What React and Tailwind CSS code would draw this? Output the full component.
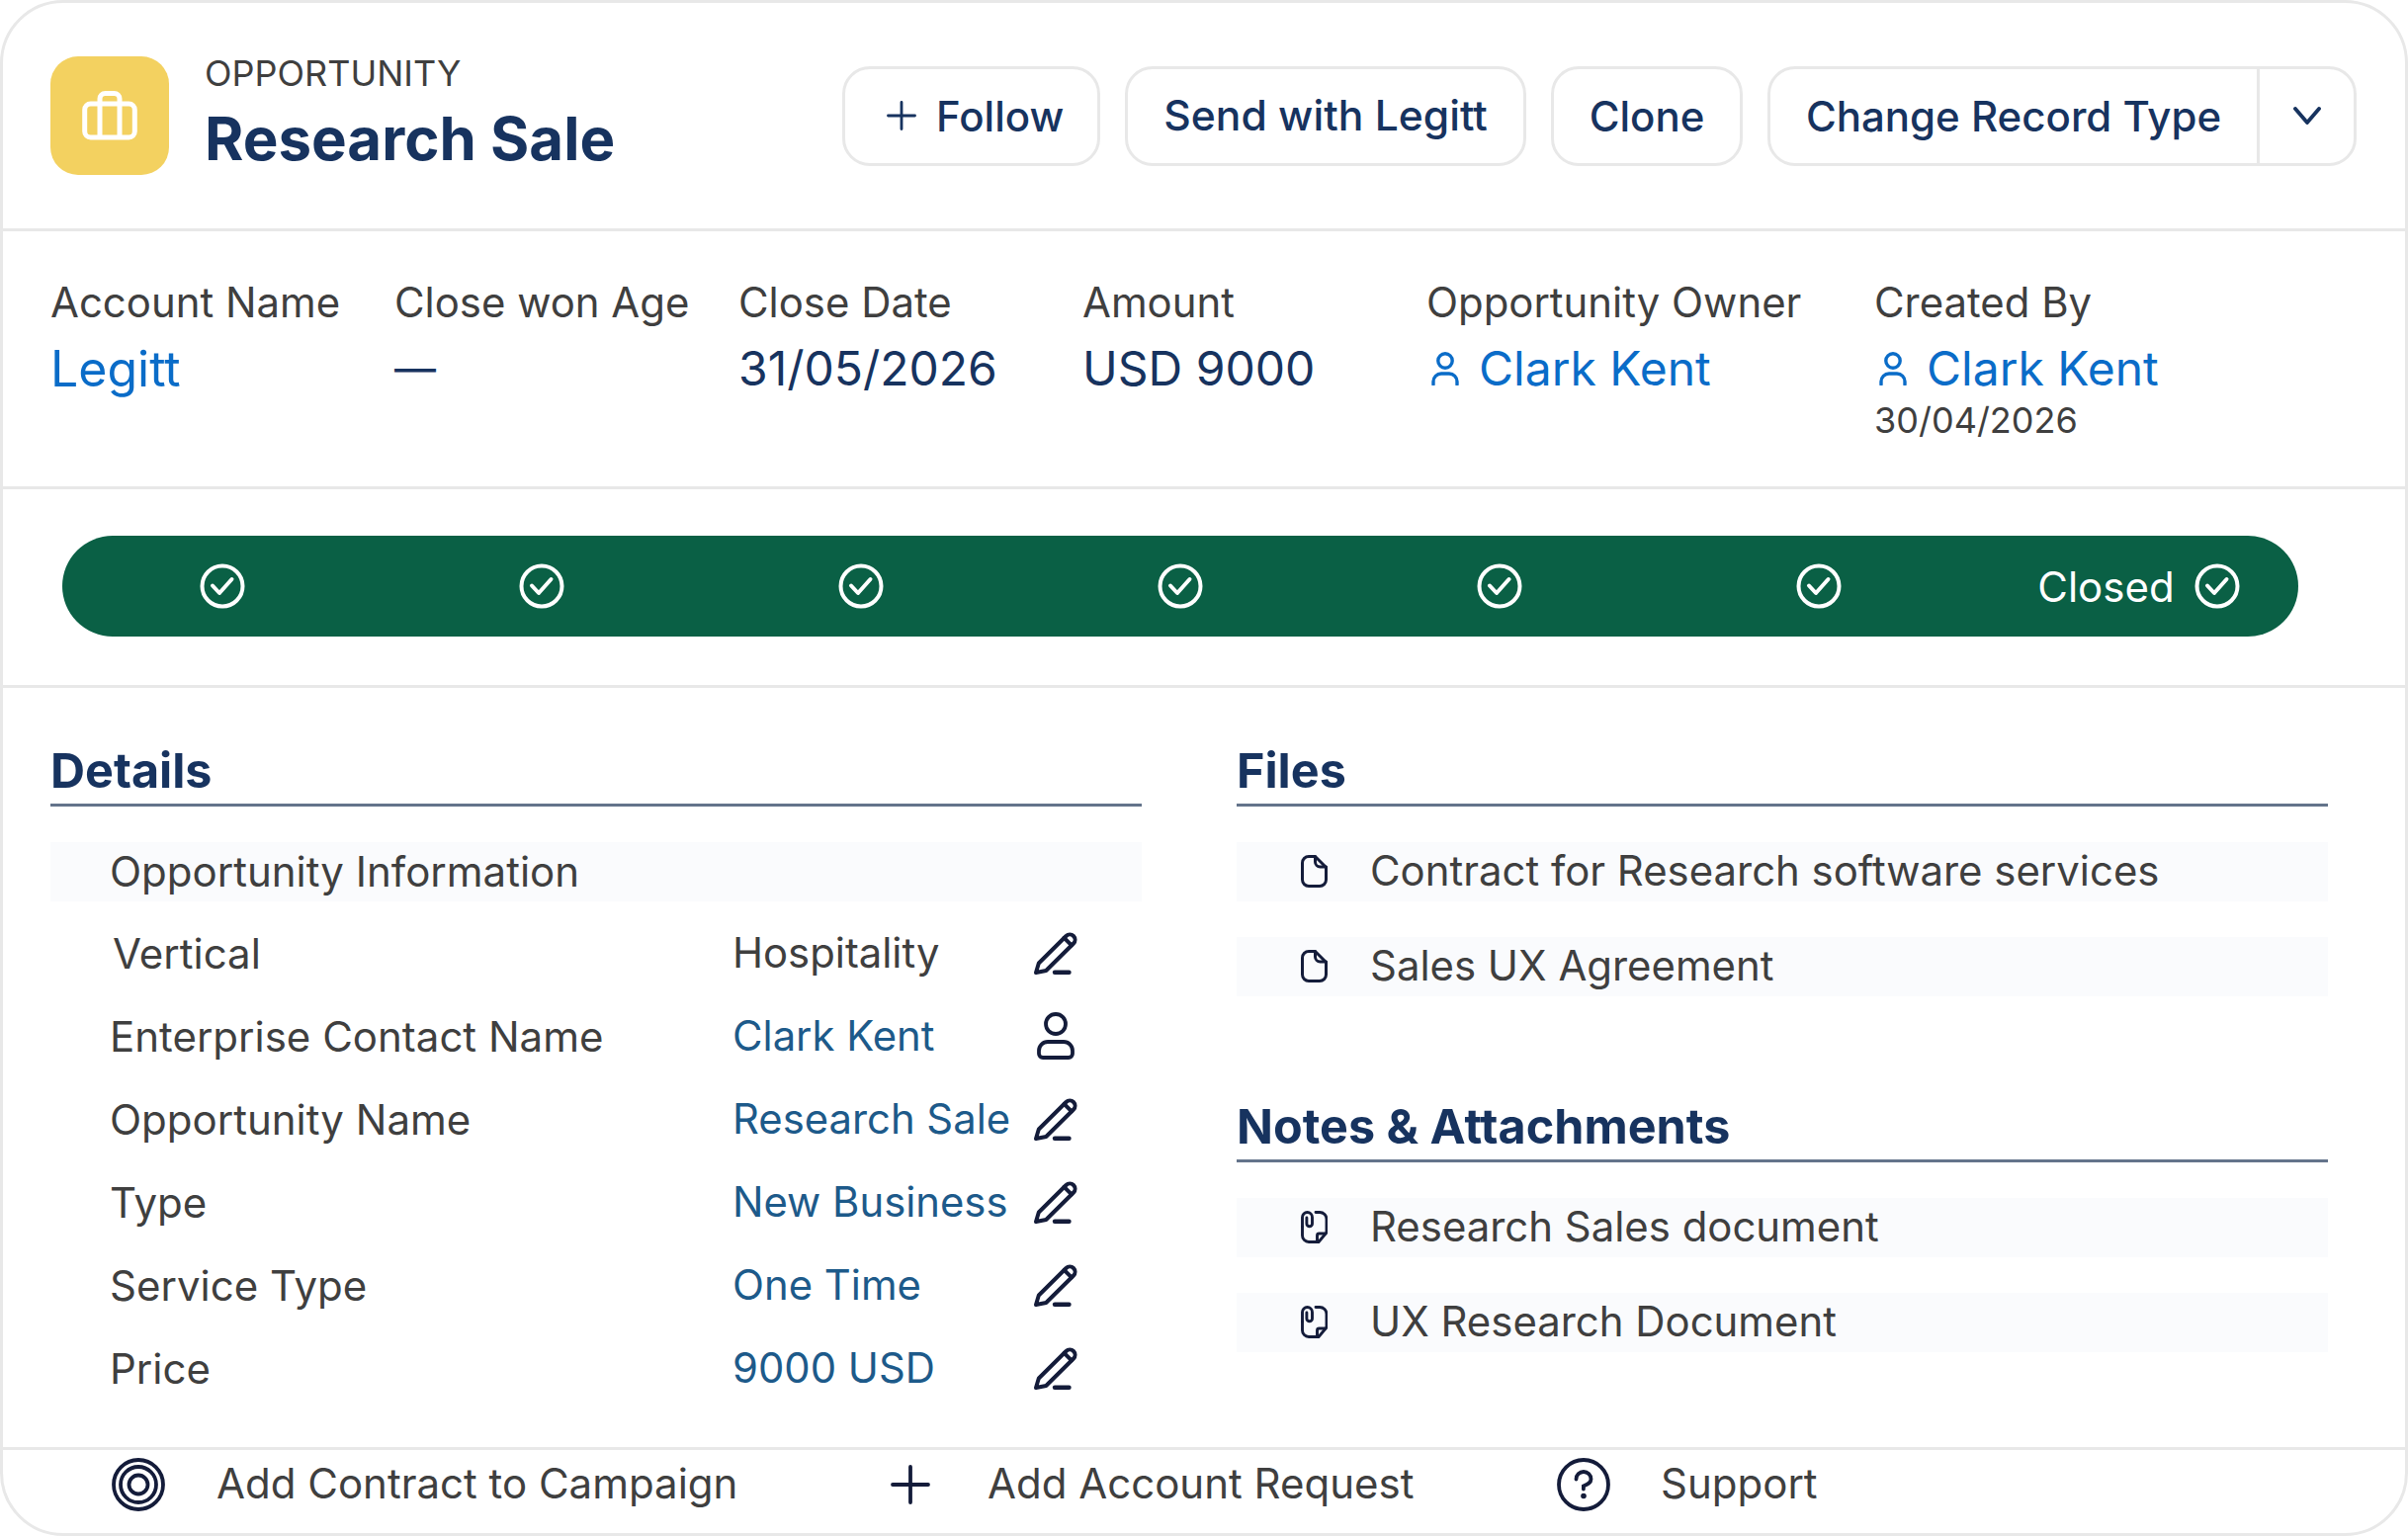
import React from 'react';

const Check = () => (
    <svg viewBox="0 0 46 46" className="w-[46px] h-[46px] shrink-0" fill="none" stroke="#ffffff" strokeWidth="4" strokeLinecap="round" strokeLinejoin="round">
        <circle cx="23" cy="23" r="20.500" />
        <path d="M13 22.500l7 7.500 12.500-14" />
    </svg>
);

const Briefcase = () => (
    <svg viewBox="0 0 56 50" className="w-[56px] h-[50px]" fill="none" stroke="#ffffff" strokeWidth="5" strokeLinejoin="round">
        <rect x="2.700" y="13" width="50.600" height="34" rx="6" />
        <path d="M18 47V8a5.500 5.500 0 0 1 5.500-5.500h9A5.500 5.500 0 0 1 38 8v39" />
    </svg>
);

const UserIcon = () => (
    <svg viewBox="0 0 28 34" className="w-[28px] h-[34px] shrink-0" fill="none" stroke="currentColor" strokeWidth="3.400" strokeLinecap="round">
        <circle cx="14" cy="9" r="7.200" />
        <path d="M2 33v-3a8 8 0 0 1 8-8h8a8 8 0 0 1 8 8v3" />
    </svg>
);

const Pencil = () => (
    <svg viewBox="0 0 48 48" className="w-[48px] h-[48px]" fill="none" stroke="#141c3a" strokeWidth="4" strokeLinecap="round" strokeLinejoin="round">
        <path d="M4 44l2.800-9.500L34.500 7a5.200 5.200 0 0 1 7.500 7.500L14.200 42z" />
        <path d="M32.500 8.800l7.500 7.500" />
        <path d="M23 43.700h14.500" strokeWidth="4.400" />
    </svg>
);

const Person = () => (
    <svg viewBox="0 0 44 52" className="w-[44px] h-[52px]" fill="none" stroke="#141c3a" strokeWidth="3.800" strokeLinejoin="round">
        <circle cx="22" cy="14" r="10" />
        <path d="M14 32h16a9 9 0 0 1 9 9v3a4 4 0 0 1-4 4H9a4 4 0 0 1-4-4v-3a9 9 0 0 1 9-9z" />
    </svg>
);

const FileIcon = () => (
    <svg viewBox="0 0 27 33" className="w-[27px] h-[33px] shrink-0" fill="none" stroke="#141c3a" strokeWidth="3" strokeLinecap="round" strokeLinejoin="round">
        <path d="M8 1.500h6.500l11 11V25a6.500 6.500 0 0 1-6.500 6.500H8A6.500 6.500 0 0 1 1.500 25V8A6.500 6.500 0 0 1 8 1.500z" />
        <path d="M14.500 1.500V7a5 5 0 0 0 5 5h6" />
    </svg>
);

const NoteIcon = () => (
    <svg viewBox="0 0 27 33" className="w-[27px] h-[33px] shrink-0" fill="none" stroke="#141c3a" strokeWidth="2.900" strokeLinecap="round" strokeLinejoin="round">
        <path d="M15 1.500h4a7 7 0 0 1 7 7V22l-8 9.500H8A6.500 6.500 0 0 1 1.500 25v-9" />
        <path d="M1.500 16V6.500a5 5 0 0 1 10 0V13a2.800 2.800 0 0 1-5.600 0V7" />
        <path d="M16.500 31v-6a2 2 0 0 1 2-2H25" />
    </svg>
);

const Target = () => (
    <svg viewBox="0 0 54 54" className="w-[54px] h-[54px] shrink-0" fill="none" stroke="#141c3a" strokeWidth="3.800">
        <circle cx="27" cy="27" r="25" />
        <circle cx="27" cy="27" r="18" />
        <circle cx="27" cy="27" r="9.500" />
    </svg>
);

const PlusIcon = ({ size }) => (
    <svg viewBox="0 0 40 40" className={size} fill="none" stroke="currentColor" strokeWidth="3.800" strokeLinecap="round">
        <path d="M20 2v36M2 20h36" />
    </svg>
);

const Help = () => (
    <svg viewBox="0 0 54 54" className="w-[54px] h-[54px] shrink-0" fill="none" stroke="#141c3a" strokeWidth="3.800" strokeLinecap="round">
        <circle cx="27" cy="27" r="25" />
        <path d="M19.500 21.500a7.500 7.500 0 0 1 15 0c0 4-4 5.500-7.600 7v3" />
        <circle cx="27" cy="38.500" r="2.800" fill="#141c3a" stroke="none" />
    </svg>
);

const detailRows = [
    { label: 'Vertical', value: 'Hospitality', plain: true },
    { label: 'Enterprise Contact Name', value: 'Clark Kent', person: true },
    { label: 'Opportunity Name', value: 'Research Sale' },
    { label: 'Type', value: 'New Business' },
    { label: 'Service Type', value: 'One Time' },
    { label: 'Price', value: '9000 USD' },
];

const Btn = ({ children, className }) => (
    <button className={`h-[101px] rounded-[28px] border-[3px] border-[#e8e8e8] flex items-center text-[42px] font-medium text-[#17335f] ${className}`}>
        {children}
    </button>
);

const Title = ({ children, className = '' }) => (
    <h3 className={`leading-[56px] text-[48.500px] font-bold text-[#17335f] pb-[5px] border-b-[3px] border-[#64748b] ${className}`}>{children}</h3>
);

const Meta = ({ label, width, children }) => (
    <div className={`shrink-0 ${width}`}>
        <div className="text-[41.900px] leading-[50px] text-[#3f3f3f]">{label}</div>
        {children}
    </div>
);

const ListRow = ({ icon, text }) => (
    <div className="h-[60px] bg-[#fafbfd] flex items-center pl-[65px] pb-[2px] gap-[43px] text-[41.900px] text-[#3f3f3f]">
        {icon}
        <span>{text}</span>
    </div>
);

export default function App() {
    return (
        <div className="w-[2436px] h-[1554px] box-border border-[3px] border-[#e8e8e8] rounded-[64px] bg-white flex flex-col overflow-hidden font-['Inter',sans-serif]">
            {/* header */}
            <div className="h-[228px] shrink-0 flex items-center justify-between pl-[48px] pr-[49px]">
                <div className="flex items-center gap-[36px]">
                    <div className="w-[120px] h-[120px] rounded-[28px] bg-[#f3d160] flex items-center justify-center">
                        <Briefcase />
                    </div>
                    <div className="-mt-[6px]">
                        <div className="text-[36px] leading-[44px] mb-[8px] text-[#3f3f3f]">OPPORTUNITY</div>
                        <div className="text-[60px] leading-[72px] font-bold text-[#17335f]">Research Sale</div>
                    </div>
                </div>
                <div className="flex items-center gap-[25px]">
                    <Btn className="w-[261px] pl-[42px] gap-[20px]">
                        <PlusIcon size="w-[30px] h-[30px]" />
                        Follow
                    </Btn>
                    <Btn className="w-[406px] justify-center">
                        <span className="text-[42.600px]">Send with Legitt</span>
                    </Btn>
                    <Btn className="w-[194px] justify-center">Clone</Btn>
                    <div className="h-[101px] w-[596px] rounded-[28px] border-[3px] border-[#e8e8e8] flex items-center text-[42px] font-medium text-[#17335f]">
                        <div className="w-[495px] h-full flex items-center justify-center border-r-[3px] border-[#e8e8e8]">Change Record Type</div>
                        <div className="flex-1 flex justify-center">
                            <svg viewBox="0 0 28 18" className="w-[28px] h-[18px]" fill="none" stroke="currentColor" strokeWidth="3.800" strokeLinecap="round" strokeLinejoin="round">
                                <path d="M2 2l12 14L26 2" />
                            </svg>
                        </div>
                    </div>
                </div>
            </div>

            {/* record fields */}
            <div className="h-[261px] shrink-0 border-t-[3px] border-[#e8e8e8] flex pl-[48px] pt-[47px]">
                <Meta label="Account Name" width="w-[348px]">
                    <div className="text-[50px] leading-[66px] mt-[9px] text-[#0a6cc8]">Legitt</div>
                </Meta>
                <Meta label="Close won Age" width="w-[348px]">
                    <div className="text-[42px] leading-[66px] mt-[9px] text-[#17335f]">—</div>
                </Meta>
                <Meta label="Close Date" width="w-[348px]">
                    <div className="text-[48px] leading-[66px] mt-[9px] text-[#17335f]">31/05/2026</div>
                </Meta>
                <Meta label="Amount" width="w-[348px]">
                    <div className="text-[48px] leading-[66px] mt-[9px] text-[#17335f]">USD 9000</div>
                </Meta>
                <Meta label="Opportunity Owner" width="w-[453px]">
                    <div className="text-[48px] leading-[66px] mt-[9px] text-[#0a6cc8] flex items-center gap-[20px] pl-[5px]">
                        <UserIcon />
                        Clark Kent
                    </div>
                </Meta>
                <Meta label="Created By" width="w-[440px]">
                    <div className="text-[48px] leading-[66px] mt-[9px] text-[#0a6cc8] flex items-center gap-[20px] pl-[5px]">
                        <UserIcon />
                        Clark Kent
                    </div>
                    <div className="text-[36px] leading-[38px] text-[#3f3f3f]">30/04/2026</div>
                </Meta>
            </div>

            {/* stage path */}
            <div className="h-[204px] shrink-0 border-t-[3px] border-b-[3px] border-[#e8e8e8] flex items-center pl-[60px] pb-[2px]">
                <div className="w-[2262px] h-[102px] rounded-full bg-[#0a6045] grid grid-cols-7 items-center text-white">
                    <div className="flex justify-center"><Check /></div>
                    <div className="flex justify-center"><Check /></div>
                    <div className="flex justify-center"><Check /></div>
                    <div className="flex justify-center"><Check /></div>
                    <div className="flex justify-center"><Check /></div>
                    <div className="flex justify-center"><Check /></div>
                    <div className="flex justify-center items-center gap-[20px] text-[42px]">
                        Closed
                        <Check />
                    </div>
                </div>
            </div>

            {/* details + files */}
            <div className="flex-1 flex pl-[48px] pt-[56px] gap-[96px]">
                <div className="w-[1104px] shrink-0">
                    <Title>Details</Title>
                    <div className="mt-[36px] h-[60px] bg-[#fafbfd] flex items-center pl-[60px] pb-[2px] text-[42px] text-[#3f3f3f]">Opportunity Information</div>
                    <div className="mt-[10px]">
                        {detailRows.map((row) => (
                            <div key={row.label} className="h-[84px] grid grid-cols-[690px_303px_48px] items-center text-[41.800px]">
                                <div className={`text-[42px] text-[#3f3f3f] ${row.plain ? 'pl-[63px]' : 'pl-[60px]'}`}>{row.label}</div>
                                <div className={row.plain ? 'text-[#3f3f3f]' : 'text-[#1d5a8a]'}>{row.value}</div>
                                <div className="flex justify-center">{row.person ? <Person /> : <Pencil />}</div>
                            </div>
                        ))}
                    </div>
                </div>
                <div className="w-[1104px] shrink-0">
                    <Title>Files</Title>
                    <div className="mt-[36px] flex flex-col gap-[36px]">
                        <ListRow icon={<FileIcon />} text="Contract for Research software services" />
                        <ListRow icon={<FileIcon />} text="Sales UX Agreement" />
                    </div>
                    <Title className="mt-[104px]">Notes &amp; Attachments</Title>
                    <div className="mt-[36px] flex flex-col gap-[36px]">
                        <ListRow icon={<NoteIcon />} text="Research Sales document" />
                        <ListRow icon={<NoteIcon />} text="UX Research Document" />
                    </div>
                </div>
            </div>

            {/* footer actions */}
            <div className="h-[87px] shrink-0 border-t-[3px] border-[#e8e8e8] flex items-center pl-[110px] pb-[14px] text-[42px] text-[#3f3f3f]">
                <Target />
                <span className="ml-[52px] w-[682px] pb-[3px]">Add Contract to Campaign</span>
                <span className="text-[#141c3a]"><PlusIcon size="w-[40px] h-[40px]" /></span>
                <span className="ml-[58px] w-[576px] pb-[3px]">Add Account Request</span>
                <Help />
                <span className="ml-[51px] pb-[3px]">Support</span>
            </div>
        </div>
    );
}
